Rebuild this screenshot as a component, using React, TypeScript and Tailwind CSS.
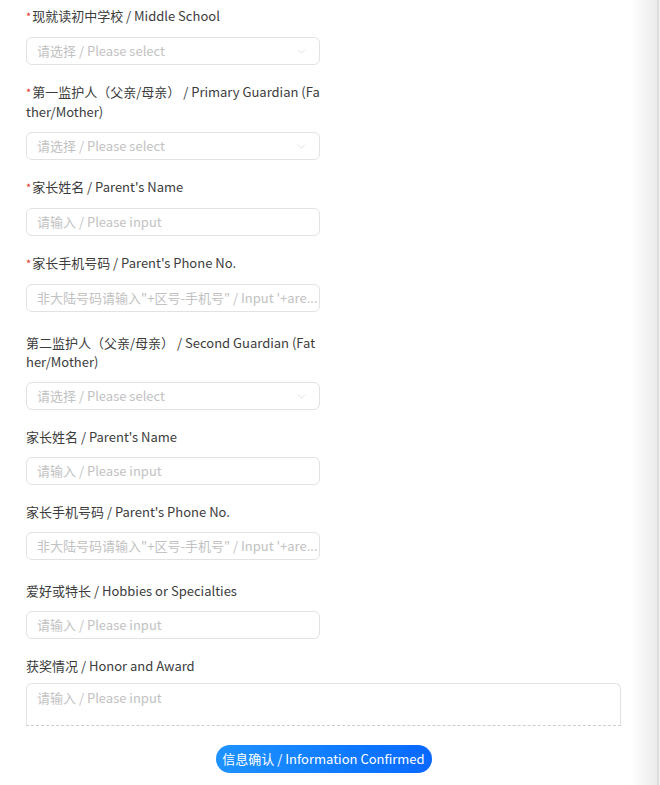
import { ChevronDown } from "lucide-react"

type Field = {
    label: string
    required?: boolean
    kind: "select" | "input"
    placeholder: string
    extra?: boolean
}

const phoneHint = "非大陆号码请输入\"+区号-手机号\" / Input '+are..."

const fields: Field[] = [
    { label: "现就读初中学校 / Middle School", required: true, kind: "select", placeholder: "请选择 / Please select" },
    { label: "第一监护人（父亲/母亲） / Primary Guardian (Father/Mother)", required: true, kind: "select", placeholder: "请选择 / Please select" },
    { label: "家长姓名 / Parent's Name", required: true, kind: "input", placeholder: "请输入 / Please input" },
    { label: "家长手机号码 / Parent's Phone No.", required: true, kind: "input", placeholder: phoneHint, extra: true },
    { label: "第二监护人（父亲/母亲） / Second Guardian (Father/Mother)", kind: "select", placeholder: "请选择 / Please select" },
    { label: "家长姓名 / Parent's Name", kind: "input", placeholder: "请输入 / Please input" },
    { label: "家长手机号码 / Parent's Phone No.", kind: "input", placeholder: phoneHint, extra: true },
    { label: "爱好或特长 / Hobbies or Specialties", kind: "input", placeholder: "请输入 / Please input" },
]

function FormItem({ field }: { field: Field }) {
    return (
        <div className={field.extra ? "mb-[21px]" : "mb-[17px]"}>
            <p className="w-[294px] break-all text-[13px] leading-[19px] text-[#3c3c3c]">
                {field.required && <span className="mr-[1px] text-[11px] text-[#e5302b]">*</span>}
                {field.label}
            </p>
            <div className="mt-[11px] flex h-[28px] w-[294px] items-center rounded-md border border-[#e2e2e2] bg-white pl-[10px] pr-[10px]">
                <span className="flex-1 whitespace-nowrap text-[13px] text-[#c2c2c2]">{field.placeholder}</span>
                {field.kind === "select" && <ChevronDown size={13} strokeWidth={1} className="mr-[1px] text-[#c8c8c8]" />}
            </div>
        </div>
    )
}

export default function App() {
    return (
        <div className="flex h-[785px] w-[660px] overflow-hidden bg-white" style={{ fontFamily: '"Noto Sans CJK SC", "Noto Sans", sans-serif' }}>
            <div className="flex-1 pl-[26px] pt-[6px]">
                <div className="w-[595px]">
                    {fields.map((field, index) => (
                        <FormItem key={index} field={field} />
                    ))}

                    <div className="mt-[1px]">
                        <p className="text-[13px] leading-[19px] text-[#3c3c3c]">获奖情况 / Honor and Award</p>
                        <div className="mt-[8px] h-[42px] rounded-t-md border-x border-t border-[#e2e2e2] px-[10px] pt-[4px] text-[13px] leading-[19px] text-[#c2c2c2]">
                            请输入 / Please input
                        </div>
                        <div className="border-t border-dashed border-[#cdcdcd]" />
                    </div>

                    <div className="mt-[19px] flex justify-center">
                        <button className="h-[28px] w-[216px] rounded-full bg-gradient-to-r from-[#1f93ff] to-[#0a68ff] text-[13px] text-white">
                            信息确认 / Information Confirmed
                        </button>
                    </div>
                </div>
            </div>
            <div className="flex w-[30px]">
                <div className="flex-1 bg-gradient-to-r from-white to-[#ebebeb]" />
                <div className="w-[2px] bg-[#dcdcdc]" />
                <div className="w-[1px] bg-[#f4f4f4]" />
            </div>
        </div>
    )
}
